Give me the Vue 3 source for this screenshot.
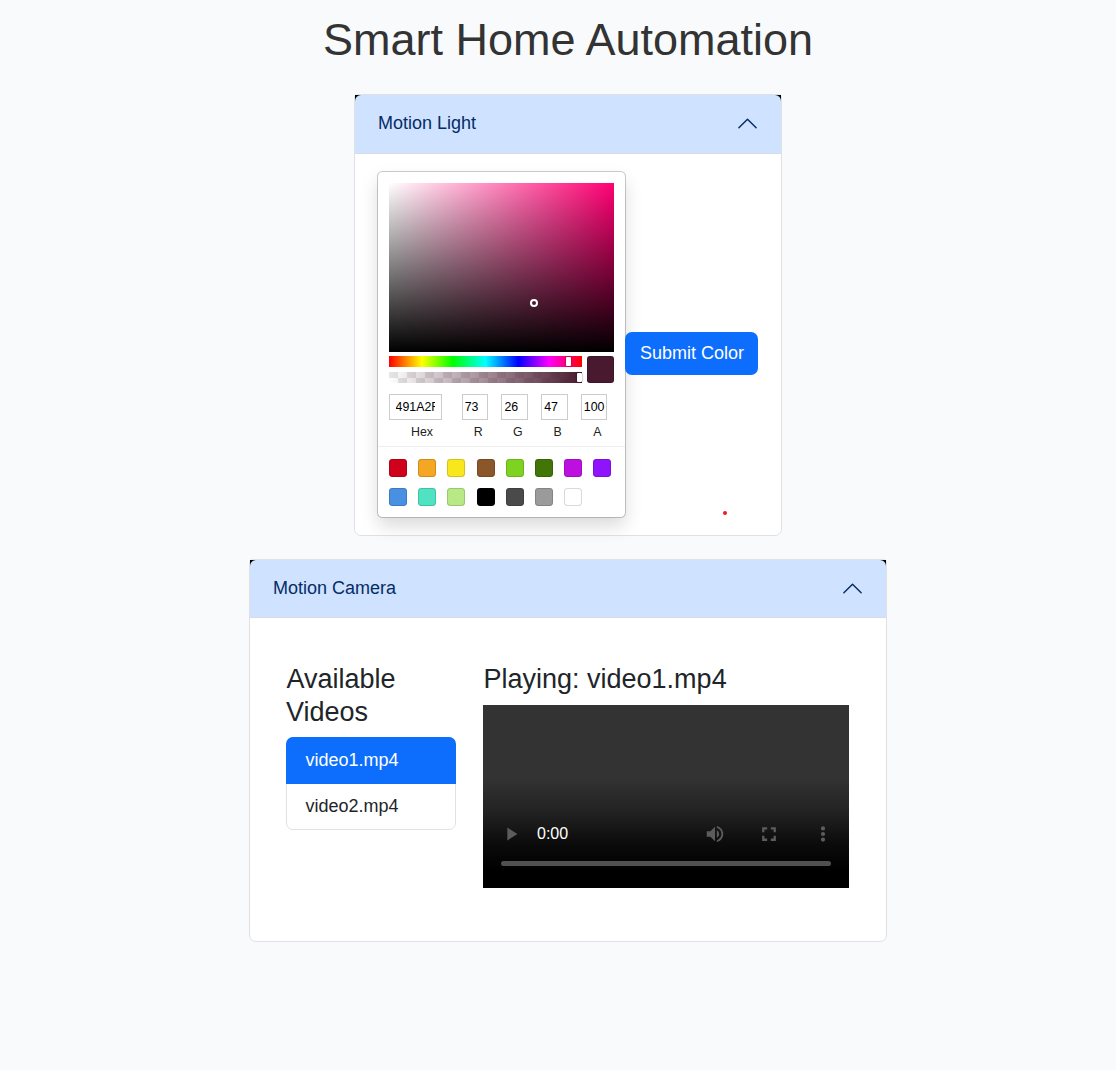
<script setup>
const fields = [
  { label: 'Hex', value: '491A2F', wide: true },
  { label: 'R', value: '73' },
  { label: 'G', value: '26' },
  { label: 'B', value: '47' },
  { label: 'A', value: '100' },
]
const presets = [
  '#D0021B', '#F5A623', '#F8E71C', '#8B572A', '#7ED321', '#417505', '#BD10E0', '#9013FE',
  '#4A90E2', '#50E3C2', '#B8E986', '#000000', '#4A4A4A', '#9B9B9B', '#FFFFFF',
]
const videos = ['video1.mp4', 'video2.mp4']
const current = 'video1.mp4'
</script>

<template>
  <main class="page">
    <h1>Smart Home Automation</h1>

    <section class="card light">
      <header class="head">
        <button class="toggle">
          <span>Motion Light</span>
          <svg class="chevron" viewBox="0 0 16 16"><path d="M2 11 8 5l6 6" /></svg>
        </button>
      </header>
      <div class="light-body">
        <div class="picker">
          <div class="saturation"><i class="pointer"></i></div>
          <div class="controls">
            <div class="sliders">
              <div class="hue"><i class="handle hue-handle"></i></div>
              <div class="alpha"><i class="handle alpha-handle"></i></div>
            </div>
            <div class="preview"></div>
          </div>
          <div class="fields">
            <div v-for="f in fields" :key="f.label" class="field" :class="{ wide: f.wide }">
              <div class="input"><span>{{ f.value }}</span></div>
              <label>{{ f.label }}</label>
            </div>
          </div>
          <div class="presets">
            <span v-for="c in presets" :key="c" class="preset" :style="{ background: c }"></span>
          </div>
        </div>
        <button class="submit">Submit Color</button>
        <i class="dot"></i>
      </div>
    </section>

    <section class="card camera">
      <header class="head">
        <button class="toggle">
          <span>Motion Camera</span>
          <svg class="chevron" viewBox="0 0 16 16"><path d="M2 11 8 5l6 6" /></svg>
        </button>
      </header>
      <div class="camera-body">
        <div class="list-col">
          <h4>Available Videos</h4>
          <ul>
            <li v-for="v in videos" :key="v" :class="{ active: v === current }">{{ v }}</li>
          </ul>
        </div>
        <div class="play-col">
          <h4>Playing: {{ current }}</h4>
          <div class="video">
            <div class="bar">
              <svg class="play" viewBox="0 0 24 24"><path d="M8 5v14l11-7z" /></svg>
              <span class="time">0:00</span>
              <svg viewBox="0 0 24 24"><path d="M3 9v6h4l5 5V4L7 9H3zm13.5 3A4.5 4.5 0 0 0 14 7.97v8.05c1.48-.73 2.5-2.25 2.5-4.02zM14 3.23v2.06c2.89.86 5 3.54 5 6.71s-2.11 5.85-5 6.71v2.06c4.01-.91 7-4.49 7-8.77s-2.99-7.86-7-8.77z" /></svg>
              <svg viewBox="0 0 24 24"><path d="M7 14H4.500v5.500h5.500v-2.500H7v-3zM4.500 10H7V7h3V4.500H4.500V10zm12.500 7h-3v2.500h5.500V14H17v3zM14 4.500V7h3v3h2.500V4.500H14z" /></svg>
              <svg viewBox="0 0 24 24"><path d="M12 8.200a2.300 2.300 0 1 0 0-4.600 2.300 2.300 0 0 0 0 4.600zm0 1.500a2.300 2.300 0 1 0 0 4.600 2.300 2.300 0 0 0 0-4.600zm0 6.100a2.300 2.300 0 1 0 0 4.600 2.300 2.300 0 0 0 0-4.600z" /></svg>
            </div>
            <div class="track"></div>
          </div>
        </div>
      </div>
    </section>
  </main>
</template>

<style>
body {
  background: #f8fafc;
}
</style>

<style scoped>
* {
  box-sizing: border-box;
}
.page {
  min-height: 1070px;
  padding: 13px 0 0 20px;
  display: flex;
  flex-direction: column;
  align-items: center;
  font: 18px/27px "Liberation Sans", Arial, sans-serif;
  color: #212529;
}
h1 {
  margin: 0 0 27px;
  font-size: 45px;
  font-weight: 400;
  line-height: 54px;
  color: #333;
}
.card {
  background: #fff;
  border: 1px solid #dee2e6;
  border-radius: 4px 4px 7px 7px;
}
.light {
  width: 428px;
  height: 442px;
}
.camera {
  width: 638px;
  height: 383px;
  margin-top: 23px;
}
.head {
  background: #000;
}
.toggle {
  width: 100%;
  height: 59px;
  padding: 0 22.5px 0 23px;
  display: flex;
  align-items: center;
  justify-content: space-between;
  border: 0;
  border-bottom: 1px solid #d5dce5;
  border-radius: 6px 6px 0 0;
  background: #cfe2ff;
  color: #052c65;
  font: inherit;
}
.toggle span {
  margin-top: -2px;
}
.camera .toggle {
  height: 58px;
}
.camera .toggle span {
  margin-top: -1px;
}
.chevron {
  width: 23px;
  height: 23px;
  margin-top: -1px;
  fill: none;
  stroke: #052c65;
  stroke-width: 1;
  stroke-linecap: round;
  stroke-linejoin: round;
}
.camera .chevron {
  margin-top: 0;
}
.light-body {
  position: relative;
  display: flex;
  align-items: center;
  padding: 18px 23px 0;
}
.picker {
  width: 247px;
  height: 345px;
  flex: none;
  padding: 11px 11px 0;
  background: #fff;
  border-radius: 4.5px;
  box-shadow: 0 0 0 1px rgba(0, 0, 0, 0.2), 0 9px 18px rgba(0, 0, 0, 0.15);
}
.saturation {
  position: relative;
  height: 169px;
  background: linear-gradient(to top, #000, transparent),
    linear-gradient(to right, #fff, rgba(255, 255, 255, 0)), #ff0073;
}
.pointer {
  position: absolute;
  left: 141px;
  top: 116px;
  width: 8px;
  height: 8px;
  border: 2px solid #fff;
  border-radius: 50%;
}
.controls {
  display: flex;
  gap: 5px;
  padding-top: 4px;
}
.sliders {
  flex: 1;
}
.hue,
.alpha {
  position: relative;
  height: 11px;
}
.hue {
  background: linear-gradient(to right, #f00 0%, #ff0 17%, #0f0 33%, #0ff 50%, #00f 67%, #f0f 83%, #f00 100%);
}
.alpha {
  margin-top: 5px;
  background: linear-gradient(to right, rgba(73, 26, 47, 0), rgb(73, 26, 47)),
    repeating-conic-gradient(#fff 0 25%, #e6e6e6 0 50%);
  background-size: 100% 100%, 18px 18px;
  background-position: 0 0, 0 -3px;
}
.handle {
  position: absolute;
  top: 1px;
  width: 5px;
  height: 9px;
  border-radius: 1px;
  background: #fff;
  box-shadow: 0 0 2px rgba(0, 0, 0, 0.6);
}
.hue-handle {
  left: 177px;
}
.alpha-handle {
  left: 188px;
}
.preview {
  width: 27px;
  height: 27px;
  border-radius: 3px;
  background: #491a2f;
  box-shadow: inset 0 0 0 1px rgba(0, 0, 0, 0.15);
}
.fields {
  display: flex;
  padding-top: 11px;
}
.field {
  width: 39.7px;
  padding-left: 6.75px;
  font-size: 12.375px;
  line-height: 15px;
}
.field.wide {
  width: 66px;
  padding-left: 0;
}
.input {
  width: 26.4px;
  height: 26px;
  padding: 6px 2px 0 3px;
  box-shadow: inset 0 0 0 1px #ccc;
  color: #000;
}
.wide .input {
  width: 53px;
  padding-left: 6.6px;
  padding-right: 6.6px;
}
.input span {
  display: block;
  overflow: hidden;
}
label {
  display: block;
  padding-top: 5px;
  text-align: center;
  color: #222;
}
.presets {
  display: flex;
  flex-wrap: wrap;
  gap: 11px 11.2px;
  margin: 6px -11px 0;
  padding: 12px 0 0 11px;
  border-top: 1px solid #eee;
}
.preset {
  width: 18px;
  height: 18px;
  border-radius: 3.4px;
  box-shadow: inset 0 0 0 1px rgba(0, 0, 0, 0.15);
}
.submit {
  position: relative;
  width: 133px;
  height: 43px;
  margin-top: 18px;
  padding: 0 0 0 1px;
  border: 0;
  border-radius: 7px;
  background: #0d6efd;
  color: #fff;
  font: inherit;
}
.dot {
  position: absolute;
  left: 368px;
  top: 357px;
  width: 4px;
  height: 4px;
  border-radius: 50%;
  background: #ed1c24;
}
.camera-body {
  display: flex;
  gap: 27px;
  padding: 45px 36px 0;
}
h4 {
  margin: 0 0 9px;
  font-size: 27px;
  font-weight: 400;
  line-height: 33px;
  text-indent: 0.5px;
}
.list-col {
  width: 170px;
}
.list-col h4 {
  margin-bottom: 8px;
}
.play-col {
  width: 366px;
}
ul {
  list-style: none;
  margin: 0;
  padding: 0;
  border: 1px solid #dee2e6;
  border-radius: 7px;
}
li {
  height: 45px;
  padding: 9px 18.5px 0;
}
li.active {
  height: 47px;
  margin: -1px -1px 0;
  padding: 10px 19.5px 0;
  border-radius: 7px 7px 0 0;
  background: #0d6efd;
  color: #fff;
}
.video {
  height: 183px;
  padding: 111px 18px 0;
  background: linear-gradient(#333 0, #333 40%, #202020 60%, #0b0b0b 76%, #000 90%);
}
.bar {
  display: flex;
  align-items: center;
  height: 36px;
  gap: 32px;
  margin-right: -2.5px;
}
.bar svg {
  width: 22px;
  height: 22px;
  fill: #5c5c5c;
}
.bar .play {
  margin-left: -1px;
}
.time {
  flex: 1;
  margin: -1px 0 0 -17px;
  font-size: 16px;
  line-height: 18px;
  color: #fff;
}
.track {
  height: 5px;
  margin-top: 9px;
  border-radius: 3px;
  background: #505050;
}
</style>
